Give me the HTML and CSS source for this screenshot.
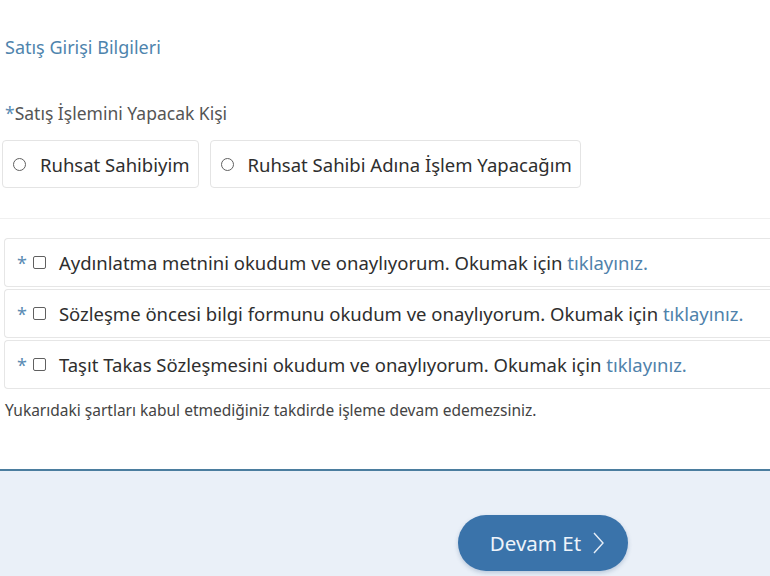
FILE: index.html
```html
<!DOCTYPE html>
<html lang="tr">
<head>
<meta charset="utf-8">
<title>Satış Girişi Bilgileri</title>
<link rel="stylesheet" href="styles.css">
</head>
<body>
<main class="form">
  <h2 class="section-title">Satış Girişi Bilgileri</h2>
  <div class="field-label"><span class="req">*</span>Satış İşlemini Yapacak Kişi</div>
  <div class="radio-group">
    <label class="radio-box"><span class="radio"></span>Ruhsat Sahibiyim</label>
    <label class="radio-box"><span class="radio"></span>Ruhsat Sahibi Adına İşlem Yapacağım</label>
  </div>
  <hr class="sep">
  <div class="terms">
    <div class="term-row"><span class="req">*</span><span class="check"></span><span class="term-text">Aydınlatma metnini okudum ve onaylıyorum. Okumak için <a class="link">tıklayınız.</a></span></div>
    <div class="term-row"><span class="req">*</span><span class="check"></span><span class="term-text">Sözleşme öncesi bilgi formunu okudum ve onaylıyorum. Okumak için <a class="link">tıklayınız.</a></span></div>
    <div class="term-row"><span class="req">*</span><span class="check"></span><span class="term-text">Taşıt Takas Sözleşmesini okudum ve onaylıyorum. Okumak için <a class="link">tıklayınız.</a></span></div>
  </div>
  <p class="note">Yukarıdaki şartları kabul etmediğiniz takdirde işleme devam edemezsiniz.</p>
</main>
<footer class="actions">
  <button class="btn-next">Devam Et
    <svg class="chev" width="11" height="22" viewBox="0 0 11 22"><path d="M1 1 L10 11 L1 21" fill="none" stroke="#e6eef7" stroke-width="1.4"/></svg>
  </button>
</footer>
</body>
</html>
```
FILE: styles.css
```css
html, body {
  margin: 0;
  padding: 0;
  background: #eaf0f8;
  height: 576px;
  overflow: hidden;
}
body {
  font-family: "Noto Sans", "Open Sans", sans-serif;
  color: #333;
}
.form {
  background: #fff;
  padding: 34px 0 0 0;
  height: 435px;
  border-bottom: 2px solid #4b7d9f;
  box-sizing: content-box;
}
.section-title {
  margin: 0 0 0 5px;
  font-size: 18px;
  font-weight: 400;
  color: #4e84ad;
  line-height: 26px;
}
.field-label {
  margin: 42px 0 0 5px;
  font-size: 17.5px;
  color: #555;
  line-height: 22px;
}
.req {
  color: #5a8bb3;
}
.radio-group {
  display: flex;
  gap: 11px;
  margin: 16px 0 0 2px;
}
.radio-box {
  display: flex;
  align-items: center;
  height: 46px;
  padding: 0 8px 0 10px;
  border: 1px solid #e4e4e4;
  border-radius: 4px;
  font-size: 18.5px;
  color: #2e2e2e;
}
.radio {
  flex: none;
  box-sizing: border-box;
  width: 13px;
  height: 13px;
  border: 1.5px solid #606060;
  border-radius: 50%;
  margin-right: 14px;
}
.sep {
  margin: 30px 0 0 0;
  border: 0;
  border-top: 1px solid #f0f0f0;
}
.terms {
  margin: 19px 0 0 4px;
  display: flex;
  flex-direction: column;
  gap: 2px;
}
.term-row {
  display: flex;
  align-items: center;
  height: 47px;
  border: 1px solid #e6e6e6;
  border-right: 0;
  border-radius: 4px 0 0 4px;
  padding-left: 12px;
  font-size: 18.5px;
  color: #2e2e2e;
  white-space: nowrap;
}
.term-row .req {
  flex: none;
  font-size: 18px;
  margin-right: 6px;
}
.check {
  flex: none;
  box-sizing: border-box;
  width: 13px;
  height: 13px;
  border: 1.5px solid #606060;
  border-radius: 2px;
  margin-right: 13px;
}
.term-text {
  flex: none;
}
.link {
  color: #4f82ab;
  text-decoration: none;
}
.note {
  margin: 10px 0 0 5px;
  font-size: 15.5px;
  color: #444;
}
.actions {
  display: flex;
  justify-content: flex-start;
  padding: 44px 0 0 458px;
}
.btn-next {
  display: flex;
  align-items: center;
  justify-content: center;
  gap: 12px;
  width: 170px;
  height: 56px;
  border: 0;
  border-radius: 28px;
  background: #3a73aa;
  color: #eef4fa;
  font-family: "Noto Sans", "Open Sans", sans-serif;
  font-size: 20.5px;
  box-shadow: 0 2px 4px rgba(40, 80, 130, 0.25);
  padding: 0 0 0 8px;
}
.chev {
  display: block;
}
```
